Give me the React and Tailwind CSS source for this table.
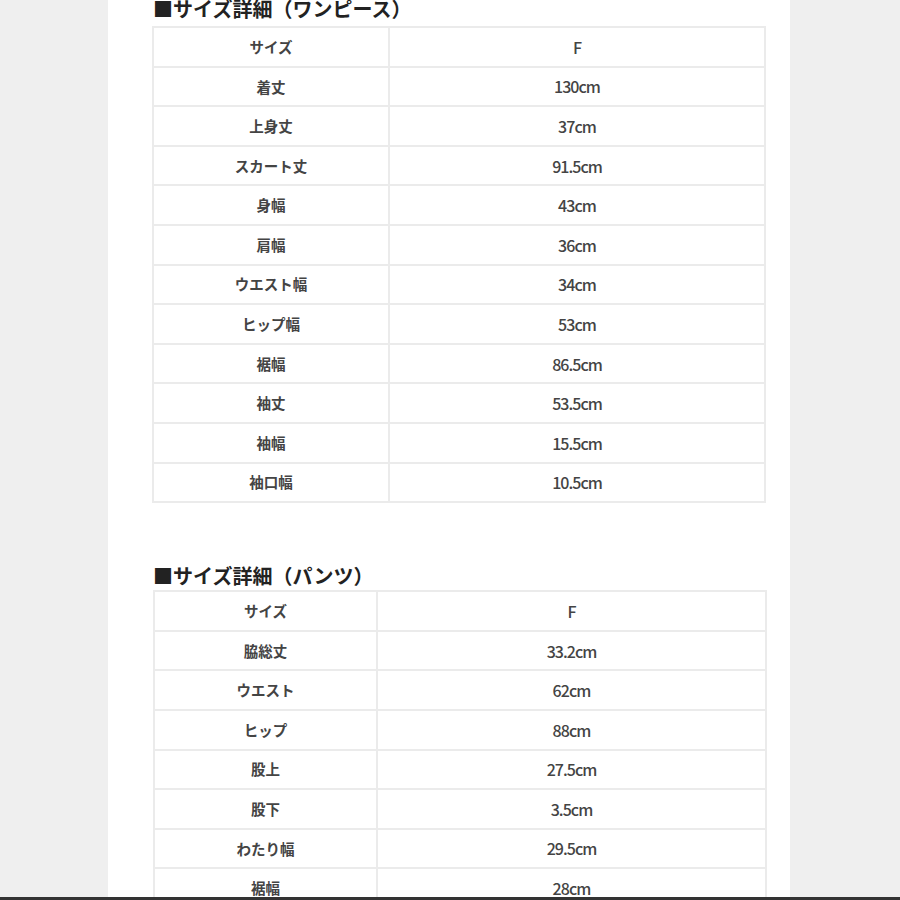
const dressRows = [
  ["サイズ", "F"],
  ["着丈", "130cm"],
  ["上身丈", "37cm"],
  ["スカート丈", "91.5cm"],
  ["身幅", "43cm"],
  ["肩幅", "36cm"],
  ["ウエスト幅", "34cm"],
  ["ヒップ幅", "53cm"],
  ["裾幅", "86.5cm"],
  ["袖丈", "53.5cm"],
  ["袖幅", "15.5cm"],
  ["袖口幅", "10.5cm"],
];

const pantsRows = [
  ["サイズ", "F"],
  ["脇総丈", "33.2cm"],
  ["ウエスト", "62cm"],
  ["ヒップ", "88cm"],
  ["股上", "27.5cm"],
  ["股下", "3.5cm"],
  ["わたり幅", "29.5cm"],
  ["裾幅", "28cm"],
];

function SizeTable({ rows, labelWidth }) {
  return (
    <div className="border-2 border-b-0 border-[#ebebeb] w-[614px]">
      {rows.map(([label, value], i) => (
        <div key={i} className="flex h-[39.6px] border-b-2 border-[#ebebeb]">
          <div
            className={`${labelWidth} shrink-0 flex items-center justify-center border-r-2 border-[#ebebeb] text-[14.5px] font-bold text-[#444]`}
          >
            {label}
          </div>
          <div className="flex-1 flex items-center justify-center text-[16px] font-medium tracking-[-0.06em] text-[#444]">
            {value}
          </div>
        </div>
      ))}
    </div>
  );
}

export default function App() {
  return (
    <div
      className="w-[900px] h-[900px] overflow-hidden bg-[#efefef] flex flex-col"
      style={{ fontFamily: '"Noto Sans CJK JP", "Noto Sans", sans-serif' }}
    >
      <div className="flex-1 flex overflow-hidden">
        <div className="ml-[108px] w-[682px] bg-white pl-[44px] overflow-hidden">
          <h2 className="pl-[1px] text-[20px] leading-none font-bold text-[#222] -mt-[1px] h-[27px]">
            ■サイズ詳細（ワンピース）
          </h2>
          <SizeTable rows={dressRows} labelWidth="w-[236px]" />
          <h2 className="pl-[1px] mt-[63px] text-[20px] leading-none font-bold text-[#222] h-[24px]">
            ■サイズ詳細（パンツ）
          </h2>
          <div className="pl-[1px]">
            <SizeTable rows={pantsRows} labelWidth="w-[223px]" />
          </div>
        </div>
      </div>
      <div className="h-[3px] bg-[#333]" />
    </div>
  );
}
